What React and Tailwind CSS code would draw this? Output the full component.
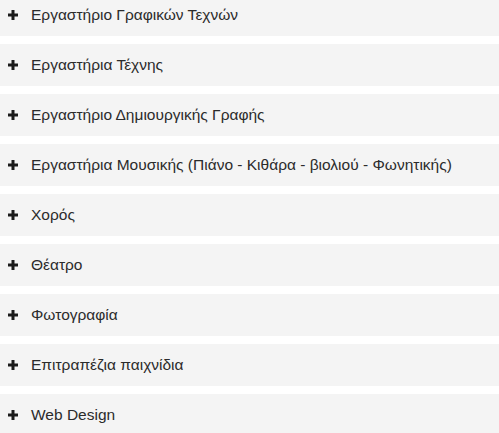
export default function App() {
  const items = [
    'Εργαστήριο Γραφικών Τεχνών',
    'Εργαστήρια Τέχνης',
    'Εργαστήριο Δημιουργικής Γραφής',
    'Εργαστήρια Μουσικής (Πιάνο - Κιθάρα - βιολιού - Φωνητικής)',
    'Χορός',
    'Θέατρο',
    'Φωτογραφία',
    'Επιτραπέζια παιχνίδια',
    'Web Design',
  ];

  return (
    <div className="h-[433px] w-[499px] overflow-hidden bg-white">
      <div className="-mt-[6px] flex flex-col gap-2" style={{ fontFamily: '"Liberation Sans", Arial, sans-serif' }}>
        {items.map((item) => (
          <div key={item} className="flex h-[42px] items-center bg-[#f4f4f4] pl-[8px]">
            <svg width="10" height="10" viewBox="0 0 10 10" className="shrink-0">
              <path d="M3.5 0h3v3.5H10v3H6.5V10h-3V6.5H0v-3h3.5z" fill="#1a1a1a" />
            </svg>
            <span className="ml-[13px] text-[15.5px] text-[#2b2b2b]">{item}</span>
          </div>
        ))}
      </div>
    </div>
  );
}
